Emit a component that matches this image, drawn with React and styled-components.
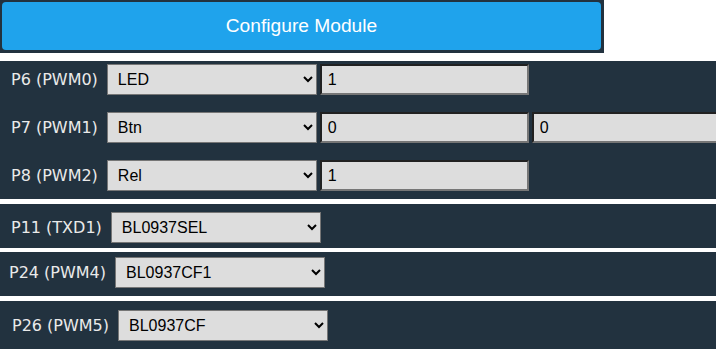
import React from "react";
import styled, { createGlobalStyle } from "styled-components";

const Global = createGlobalStyle`
  body {
    margin: 0;
    background: #ffffff;
    font-family: "Liberation Sans", Arial, sans-serif;
    overflow: hidden;
  }
`;

const ButtonBox = styled.div`
  width: 604px;
  box-sizing: border-box;
  padding: 2px 3px 3px 2px;
  background: #22323f;
`;

const ConfigButton = styled.button`
  display: block;
  width: 100%;
  height: 48px;
  border: 0;
  border-radius: 4px;
  background: #1fa3ec;
  color: #ffffff;
  font-family: "Liberation Sans", Arial, sans-serif;
  font-size: 19.2px;
  cursor: pointer;
`;

const Panel = styled.div`
  background: #22323f;
  margin-top: ${(p) => p.$gap}px;
  padding: ${(p) => p.$pad};
  display: flex;
  flex-direction: column;
  gap: 17px;
  overflow: hidden;
`;

const Row = styled.div`
  display: flex;
  align-items: center;
  gap: 3px;
  padding-left: ${(p) => p.$indent}px;
  white-space: nowrap;
`;

const Label = styled.label`
  font-family: "DejaVu Sans", Verdana, sans-serif;
  font-size: 16px;
  color: #eaeaea;
  margin-right: 6px;
`;

const Select = styled.select`
  width: 210px;
  height: 31px;
  box-sizing: border-box;
  flex: none;
  background: #dddddd;
  color: #000000;
  border: 1px solid #767676;
  border-radius: 0;
  padding: 0 6px;
  font-family: "Liberation Sans", Arial, sans-serif;
  font-size: 16px;
`;

const Field = styled.input`
  width: 209px;
  height: 31px;
  box-sizing: border-box;
  flex: none;
  background: #dddddd;
  color: #000000;
  border: 2px inset #767676;
  padding: 0 6px;
  font-family: "Liberation Sans", Arial, sans-serif;
  font-size: 16px;
`;

const pinRows = [
  { label: "P6 (PWM0)", role: "LED", values: ["1"] },
  { label: "P7 (PWM1)", role: "Btn", values: ["0", "0"] },
  { label: "P8 (PWM2)", role: "Rel", values: ["1"] },
];

const single = [
  { label: "P11 (TXD1)", role: "BL0937SEL", indent: 11, gap: 5, pad: "8px 0 5px" },
  { label: "P24 (PWM4)", role: "BL0937CF1", indent: 9, gap: 4, pad: "5px 0 8px" },
  { label: "P26 (PWM5)", role: "BL0937CF", indent: 12, gap: 5, pad: "9px 0 9px" },
];

function PinRow({ label, role, values = [], indent }) {
  return (
    <Row $indent={indent}>
      <Label>{label}</Label>
      <Select defaultValue={role}>
        <option>{role}</option>
      </Select>
      {values.map((v, i) => (
        <Field key={i} defaultValue={v} />
      ))}
    </Row>
  );
}

export default function App() {
  return (
    <>
      <Global />
      <ButtonBox>
        <ConfigButton>Configure Module</ConfigButton>
      </ButtonBox>
      <Panel $gap={8} $pad="3px 0 8px">
        {pinRows.map((r) => (
          <PinRow key={r.label} {...r} indent={11} />
        ))}
      </Panel>
      {single.map((r) => (
        <Panel key={r.label} $gap={r.gap} $pad={r.pad}>
          <PinRow label={r.label} role={r.role} indent={r.indent} />
        </Panel>
      ))}
    </>
  );
}
